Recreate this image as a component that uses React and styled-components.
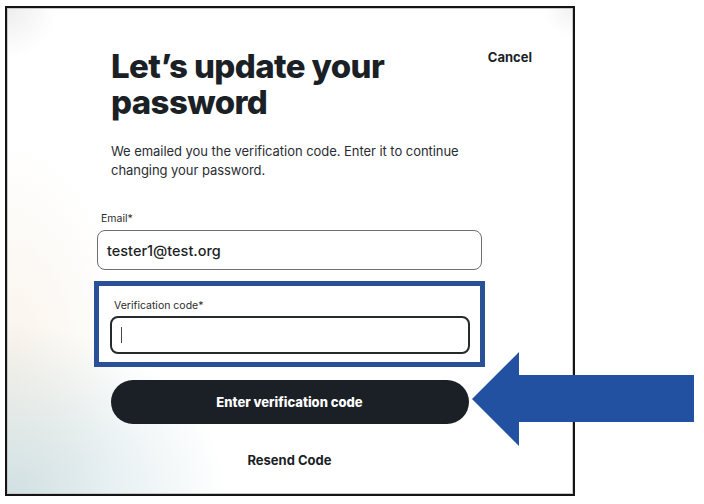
import React from "react";
import styled, { createGlobalStyle } from "styled-components";

const GlobalStyle = createGlobalStyle`
  html, body { margin: 0; padding: 0; background: #ffffff; }
  body { font-family: Inter, "Noto Sans", sans-serif; color: #1b1f26; }
  * { box-sizing: border-box; }
`;

const Page = styled.div`
  position: relative;
  width: 704px;
  height: 504px;
  padding: 6px 0 0 5px;
  overflow: hidden;
`;

const Frame = styled.div`
  width: 570px;
  height: 490px;
  border: 2px solid #141414;
  box-shadow: inset 0 0 0 1px #c9c9c9;
  background:
    radial-gradient(ellipse 220px 170px at 0% 100%, rgba(190, 214, 220, 0.7), rgba(255,255,255,0) 100%),
    radial-gradient(ellipse 120px 230px at 0% 75%, rgba(246, 236, 222, 0.65), rgba(255,255,255,0) 100%),
    radial-gradient(ellipse 50px 50px at 0% 0%, rgba(220, 220, 220, 0.5), rgba(255,255,255,0) 100%),
    radial-gradient(ellipse 30px 30px at 100% 0%, rgba(228, 228, 228, 0.5), rgba(255,255,255,0) 100%),
    #ffffff;
  display: flex;
  flex-direction: column;
`;

const Header = styled.div`
  display: flex;
  justify-content: space-between;
  align-items: flex-start;
  padding: 40px 41px 0 104px;
`;

const Title = styled.h1`
  margin: 0;
  font-family: Inter, sans-serif;
  font-weight: 800;
  font-size: 33px;
  line-height: 36px;
  letter-spacing: -0.6px;
  color: #1b1f26;
  width: 300px;
`;

const TextLink = styled.button`
  border: 0;
  background: none;
  padding: 0;
  font-family: Inter, sans-serif;
  font-weight: 700;
  font-size: ${p => p.$size || 13}px;
  line-height: 16px;
  color: #1b1f26;
  margin-top: ${p => p.$top || 0}px;
  cursor: pointer;
`;

const Intro = styled.p`
  margin: 22px 0 0 104px;
  width: 372px;
  font-size: 13px;
  letter-spacing: -0.05px;
  line-height: 19px;
  color: #2a2d33;
`;

const Form = styled.div`
  margin: 32px 0 0 90px;
  width: 385px;
  display: flex;
  flex-direction: column;
  align-items: stretch;
`;

const Label = styled.label`
  display: block;
  font-size: 10.5px;
  line-height: 14px;
  color: #2b2b2b;
  padding-left: ${p => p.$indent || 0}px;
  margin-bottom: ${p => p.$gap || 4}px;
`;

const Input = styled.div`
  height: ${p => p.$h || 40}px;
  border: ${p => (p.$focused ? "2px solid #26292e" : "1px solid #6d6f73")};
  border-radius: 8px;
  background: #ffffff;
  display: flex;
  align-items: center;
  padding-left: 9px;
  font-size: 14.5px;
  font-weight: 500;
  color: #1b1f26;
`;

const Caret = styled.span`
  display: block;
  width: 1px;
  height: 16px;
  background: #444;
`;

const Highlight = styled.div`
  margin: 11px -3px 0;
  border: 5px solid #2a5198;
  padding: 13px 10px 8px 11px;
  background: #ffffff;
`;

const PrimaryButton = styled.button`
  align-self: center;
  margin-top: 13px;
  width: 358px;
  height: 44px;
  border: 0;
  border-radius: 22px;
  background: #1b1f26;
  color: #ffffff;
  font-family: Inter, sans-serif;
  font-weight: 800;
  font-size: 13px;
  cursor: pointer;
`;

const Footer = styled.div`
  display: flex;
  justify-content: center;
  margin-top: 28px;
`;

const Arrow = styled.svg`
  position: absolute;
  left: 470px;
  top: 350px;
`;

export default function App() {
  return (
    <>
      <GlobalStyle />
      <Page>
        <Frame>
          <Header>
            <Title>Let’s update your password</Title>
            <TextLink $top={1}>Cancel</TextLink>
          </Header>
          <Intro>
            We emailed you the verification code. Enter it to continue changing your password.
          </Intro>
          <Form>
            <Label $indent={4}>Email*</Label>
            <Input>tester1@test.org</Input>
            <Highlight>
              <Label $indent={4} $gap={3}>Verification code*</Label>
              <Input $focused $h={38}>
                <Caret />
              </Input>
            </Highlight>
            <PrimaryButton>Enter verification code</PrimaryButton>
            <Footer>
              <TextLink>Resend Code</TextLink>
            </Footer>
          </Form>
        </Frame>
        <Arrow width="226" height="98" viewBox="470 350 226 98">
          <polygon
            points="472,399 519,352 519,375 694,375 694,422 519,422 519,446"
            fill="#2151a0"
          />
        </Arrow>
      </Page>
    </>
  );
}
